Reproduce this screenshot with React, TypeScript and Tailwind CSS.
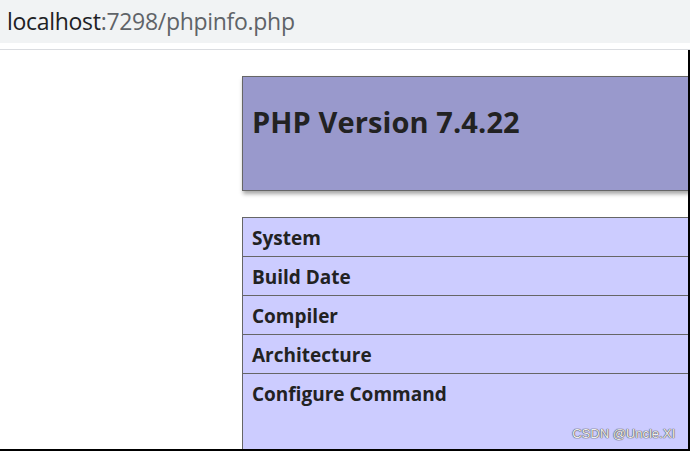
import React from 'react'

const rows = ['System', 'Build Date', 'Compiler', 'Architecture']

export default function App() {
  return (
    <div className="w-[690px] h-[451px] overflow-hidden bg-white flex flex-col font-['Open_Sans','Noto_Sans',sans-serif]">
      {/* address bar */}
      <div className="h-[43px] shrink-0 bg-[#f1f3f4] flex items-center pl-[7px] text-[23px] tracking-[-0.3px]">
        <span className="text-[#202124]">localhost</span>
        <span className="text-[#5f6368]">:7298/phpinfo.php</span>
      </div>
      <div className="h-[7px] shrink-0 bg-white border-b border-[#dadce0]" />

      {/* page */}
      <div className="relative flex-1 min-h-0 overflow-hidden border-r-2 border-b-2 border-black">
        <div className="pl-[242px] pt-[26px] w-[900px]">
          <div className="h-[115px] bg-[#9999cc] border border-[#666] shadow-[1px_3px_4px_rgba(0,0,0,0.35)] pl-[9px] pt-[30px]">
            <h1 className="text-[29px] font-bold text-[#222] leading-none tracking-[0.1px]">PHP Version 7.4.22</h1>
          </div>

          <div className="mt-[26px] border border-[#666] bg-[#ccccff]">
            {rows.map((r) => (
              <div key={r} className="h-[39px] border-b border-[#666] pl-[9px] pt-[10px] text-[19px] font-bold text-[#222] leading-[20px]">
                {r}
              </div>
            ))}
            <div className="h-[100px] pl-[9px] pt-[10px] text-[19px] font-bold text-[#222] leading-[20px]">
              Configure Command
            </div>
          </div>
        </div>

        <div className="absolute right-[13px] bottom-[6px] text-[13px] text-[#eeeeee] font-['Liberation_Sans',sans-serif] [text-shadow:0_0_1px_#444,0_0_1px_#666,0_0_1px_#666]">
          CSDN @Uncle.XI
        </div>
      </div>
    </div>
  )
}
